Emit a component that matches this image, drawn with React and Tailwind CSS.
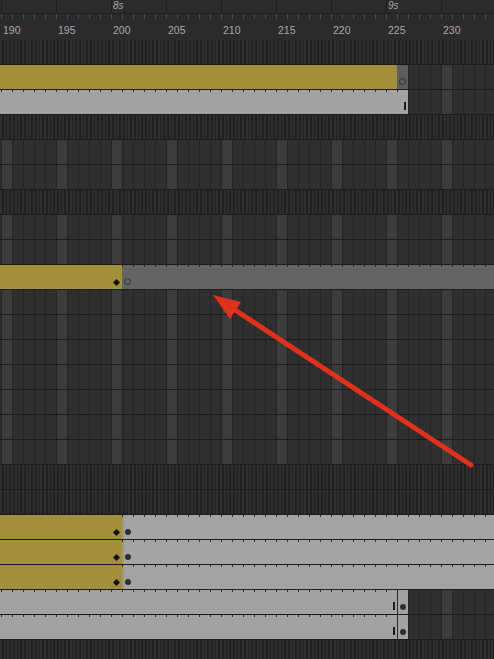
import React from "react";

const LAST = 234;
const range = (a, b) => Array.from({ length: b - a + 1 }, (_, i) => a + i);

function Row({ children, className = "" }) {
  return (
    <div className={`flex h-[25px] shrink-0 overflow-hidden border-b border-[#1c1c1c] ${className}`}>
      {children}
    </div>
  );
}

function Striped() {
  return (
    <Row className="bg-[repeating-linear-gradient(90deg,#2e2e2e_0px,#2e2e2e_2px,#202020_2px,#202020_3.667px)]" />
  );
}

function Cells({ from }) {
  return range(from, LAST).map((f) => (
    <div
      key={f}
      className={`h-full w-[11px] shrink-0 border-l border-[#242424] ${
        f % 5 === 0 ? "bg-[#3c3c3c]" : "bg-[#2f2f2f]"
      }`}
    />
  ));
}

function CellRow() {
  return (
    <Row>
      <div className="w-px shrink-0 bg-[#2f2f2f]" />
      <Cells from={190} />
    </Row>
  );
}

function TickFrame({ bg, children, className = "" }) {
  return (
    <div className={`relative h-full w-[11px] shrink-0 ${bg} ${className}`}>
      <div className="absolute left-0 top-0 h-[2px] w-px bg-[#2c2c2c]" />
      {children}
    </div>
  );
}

const Diamond = () => (
  <svg className="absolute left-[2px] top-[14px]" width="7" height="7" viewBox="0 0 7 7">
    <polygon points="3.5,0 7,3.5 3.5,7 0,3.5" fill="#111" />
  </svg>
);

const Hollow = () => (
  <div className="absolute left-[2px] top-[13px] h-[7px] w-[7px] rounded-full border border-[#2e2e2e]" />
);

const Marker = () => <div className="absolute left-[7px] top-[12px] h-[8px] w-[2px] bg-[#1a1a1a]" />;

function Row1() {
  return (
    <Row>
      <div className="w-[397px] shrink-0 bg-[#a38e3b]" />
      <div className="relative w-[11px] shrink-0 bg-[#5d5d5d]">
        <Hollow />
      </div>
      <Cells from={227} />
    </Row>
  );
}

function Row2() {
  return (
    <Row>
      <div className="w-px shrink-0 bg-[#a2a2a2]" />
      {range(190, 226).map((f) => (
        <TickFrame key={f} bg="bg-[#a2a2a2]">
          {f === 226 && <Marker />}
        </TickFrame>
      ))}
      <Cells from={227} />
    </Row>
  );
}

function Row9() {
  return (
    <Row>
      <div className="w-[111px] shrink-0 bg-[#a38e3b]" />
      <div className="relative w-[11px] shrink-0 bg-[#a38e3b]">
        <Diamond />
      </div>
      {range(201, LAST).map((f) => (
        <TickFrame key={f} bg="bg-[#646464]">
          {f === 201 && <Hollow />}
        </TickFrame>
      ))}
    </Row>
  );
}

function Row19() {
  return (
    <Row>
      <div className="w-[111px] shrink-0 bg-[#a38e3b]" />
      <div className="relative w-[11px] shrink-0 bg-[#a38e3b]">
        <Diamond />
      </div>
      {range(201, LAST).map((f) =>
        f === 201 ? (
          <TickFrame key={f} bg="bg-[linear-gradient(90deg,#a39460_0px,#a3a3a3_3px)]">
            <div className="absolute left-[3px] top-[14px] h-[6px] w-[6px] rounded-full bg-[#2e2e2e]" />
          </TickFrame>
        ) : (
          <TickFrame key={f} bg="bg-[#a3a3a3]" />
        )
      )}
    </Row>
  );
}

function Row22() {
  return (
    <Row>
      <div className="w-px shrink-0 bg-[#a2a2a2]" />
      {range(190, 225).map((f) => (
        <TickFrame key={f} bg="bg-[#a2a2a2]">
          {f === 225 && <Marker />}
        </TickFrame>
      ))}
      <div className="relative w-[11px] shrink-0 border-l border-[#2a2a2a] bg-[#a2a2a2]">
        <div className="absolute left-[2px] top-[14px] h-[6px] w-[6px] rounded-full bg-[#2e2e2e]" />
      </div>
      <Cells from={227} />
    </Row>
  );
}

function Ruler() {
  const segs = range(0, 8);
  const labels = [190, 195, 200, 205, 210, 215, 220, 225, 230];
  return (
    <div className="flex h-[40px] shrink-0 flex-col bg-[#2b2b2b] text-[#a9a9a9]">
      <div className="flex h-[14px] shrink-0 border-b border-[#1f1f1f]">
        <div className="w-px shrink-0" />
        {segs.map((i) => (
          <div key={i} className="h-full w-[55px] shrink-0 border-l border-[#1f1f1f] pl-[1px] pt-[1px] text-[10px] italic leading-none">
            {i === 2 ? "8s" : i === 7 ? "9s" : ""}
          </div>
        ))}
      </div>
      <div className="flex h-[5px] shrink-0">
        <div className="w-px shrink-0" />
        {range(190, LAST).map((f) => (
          <div key={f} className="h-full w-[11px] shrink-0">
            <div className="h-full w-px bg-[#4c4c4c]" />
          </div>
        ))}
      </div>
      <div className="flex flex-1">
        <div className="w-px shrink-0" />
        {labels.map((l) => (
          <div key={l} className="w-[55px] shrink-0 pl-[2px] pt-[6px] text-[10.5px] leading-none">
            {l}
          </div>
        ))}
      </div>
    </div>
  );
}

export default function App() {
  const rows = [
    "s", "r1", "r2", "s", "c", "c", "s", "c", "c", "r9",
    "c", "c", "c", "c", "c", "c", "c", "s", "s",
    "r19", "r19", "r19", "r22", "r22", "s",
  ];
  return (
    <div className="relative flex h-[659px] w-[494px] flex-col overflow-hidden bg-[#282828] font-['Liberation_Sans',sans-serif]">
      <Ruler />
      {rows.map((r, i) => {
        if (r === "s") return <Striped key={i} />;
        if (r === "c") return <CellRow key={i} />;
        if (r === "r1") return <Row1 key={i} />;
        if (r === "r2") return <Row2 key={i} />;
        if (r === "r9") return <Row9 key={i} />;
        if (r === "r19") return <Row19 key={i} />;
        return <Row22 key={i} />;
      })}
      <svg className="pointer-events-none absolute left-0 top-0" width="494" height="659" viewBox="0 0 494 659">
        <line x1="471" y1="465" x2="232" y2="308" stroke="#e0311c" strokeWidth="5" strokeLinecap="round" />
        <polygon points="213,295 241,302 230,319" fill="#e0311c" />
      </svg>
    </div>
  );
}
